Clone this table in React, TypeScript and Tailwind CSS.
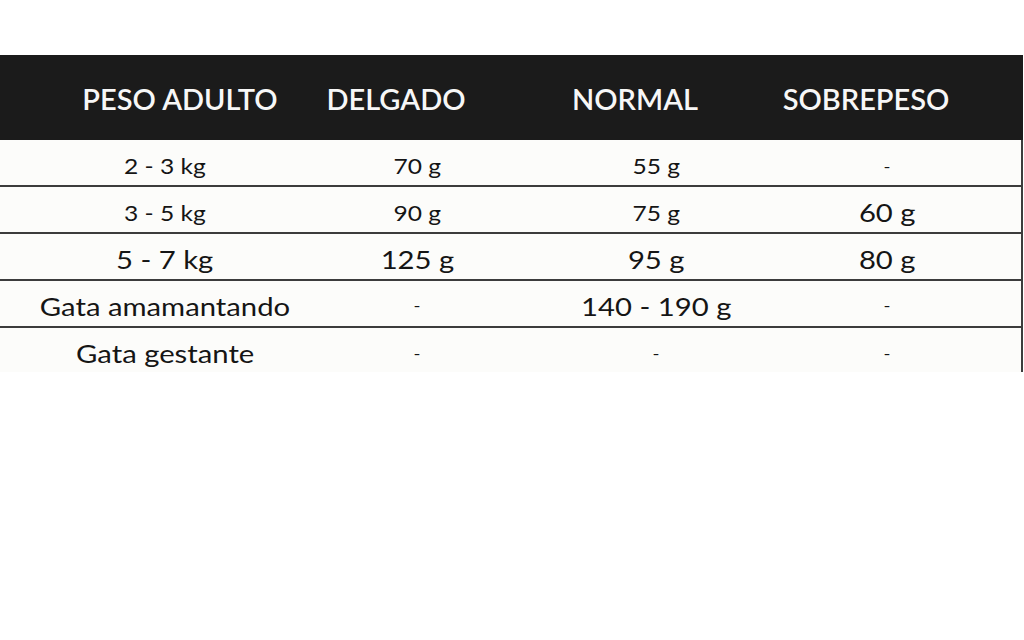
const rows: { cells: { text: string; size: string }[] }[] = [
  {
    cells: [
      { text: '2 - 3 kg', size: 'text-[21px]' },
      { text: '70 g', size: 'text-[21px]' },
      { text: '55 g', size: 'text-[21px]' },
      { text: '-', size: 'text-[16px]' },
    ],
  },
  {
    cells: [
      { text: '3 - 5 kg', size: 'text-[21px]' },
      { text: '90 g', size: 'text-[21px]' },
      { text: '75 g', size: 'text-[21px]' },
      { text: '60 g', size: 'text-[25px]' },
    ],
  },
  {
    cells: [
      { text: '5 - 7 kg', size: 'text-[25px]' },
      { text: '125 g', size: 'text-[25px]' },
      { text: '95 g', size: 'text-[25px]' },
      { text: '80 g', size: 'text-[25px]' },
    ],
  },
  {
    cells: [
      { text: 'Gata amamantando', size: 'text-[25px]' },
      { text: '-', size: 'text-[16px] -translate-y-[2px]' },
      { text: '140 - 190 g', size: 'text-[25px]' },
      { text: '-', size: 'text-[16px] -translate-y-[2px]' },
    ],
  },
  {
    cells: [
      { text: 'Gata gestante', size: 'text-[25px]' },
      { text: '-', size: 'text-[16px]' },
      { text: '-', size: 'text-[16px]' },
      { text: '-', size: 'text-[16px]' },
    ],
  },
];

const headers = ['PESO ADULTO', 'DELGADO', 'NORMAL', 'SOBREPESO'];

const App = () => {
  return (
    <div className="min-h-screen bg-white pt-[55px] font-['Lato','Noto_Sans',sans-serif]">
      <div className="w-[1023px]">
        <div className="grid h-[85px] grid-cols-[280px_152px_326px_136px] items-center bg-[#1b1b1b] pl-[40px] pt-[2px]">
          {headers.map((header) => (
            <div key={header} className="flex justify-center">
              <span className="whitespace-nowrap text-[29px] font-semibold text-[#f7f7f7]">{header}</span>
            </div>
          ))}
        </div>
        <div className="border-r-2 border-[#3c3c3c] bg-[#fcfcfa]">
          {rows.map((row, rowIndex) => (
            <div
              key={rowIndex}
              className={`grid grid-cols-[330px_174px_304px_158px] items-center pt-[6px] ${
                rowIndex < rows.length - 1 ? 'h-[47px] border-b-2 border-[#3c3c3c]' : 'h-[44px]'
              }`}
            >
              {row.cells.map((cell, cellIndex) => (
                <div key={cellIndex} className="flex justify-center">
                  <span
                    className={`inline-block scale-x-[1.17] whitespace-nowrap leading-none text-[#151515] ${cell.size}`}
                  >
                    {cell.text}
                  </span>
                </div>
              ))}
            </div>
          ))}
        </div>
      </div>
    </div>
  );
};

export default App;
